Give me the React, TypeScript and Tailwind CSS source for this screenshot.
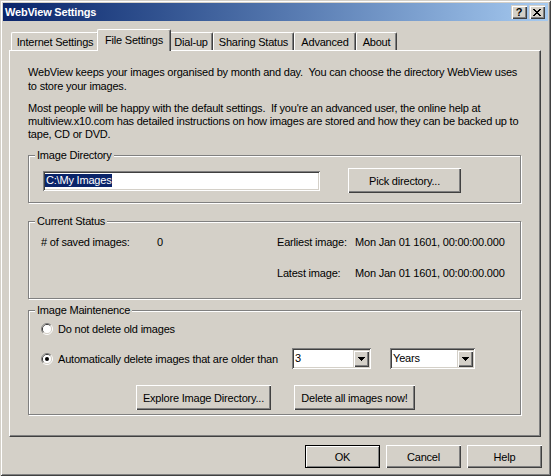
import React from 'react';

// classic 3D edges
const raised =
  'bg-[#d4d0c8] shadow-[inset_1px_1px_0_#ffffff,inset_-1px_-1px_0_#404040,inset_-2px_-2px_0_#808080]';
const raisedSmall =
  'bg-[#d4d0c8] shadow-[inset_1px_1px_0_#d4d0c8,inset_2px_2px_0_#ffffff,inset_-1px_-1px_0_#404040,inset_-2px_-2px_0_#808080]';
const sunken =
  'bg-white shadow-[inset_1px_1px_0_#808080,inset_-1px_-1px_0_#ffffff,inset_2px_2px_0_#404040,inset_-2px_-2px_0_#d4d0c8]';

const X_PIXELS = [
  'xx....xx',
  '.xx..xx.',
  '..xxxx..',
  '...xx...',
  '..xxxx..',
  '.xx..xx.',
  'xx....xx',
];

function CloseGlyph() {
  return (
    <svg width="8" height="7" shapeRendering="crispEdges">
      {X_PIXELS.map((row, y) =>
        row.split('').map((c, x) =>
          c === 'x' ? <rect key={`${x}-${y}`} x={x} y={y} width="1" height="1" fill="#000" /> : null
        )
      )}
    </svg>
  );
}

function DownArrow() {
  return (
    <svg width="7" height="4" shapeRendering="crispEdges">
      <rect x="0" y="0" width="7" height="1" fill="#000" />
      <rect x="1" y="1" width="5" height="1" fill="#000" />
      <rect x="2" y="2" width="3" height="1" fill="#000" />
      <rect x="3" y="3" width="1" height="1" fill="#000" />
    </svg>
  );
}

function Radio({ checked }: { checked?: boolean }) {
  return (
    <svg width="12" height="12" className="shrink-0">
      <path d="M9.89 2.11 A5.5 5.5 0 0 0 2.11 9.89" stroke="#808080" fill="none" />
      <path d="M2.11 9.89 A5.5 5.5 0 0 0 9.89 2.11" stroke="#ffffff" fill="none" />
      <path d="M9.18 2.82 A4.5 4.5 0 0 0 2.82 9.18" stroke="#404040" fill="none" />
      <path d="M2.82 9.18 A4.5 4.5 0 0 0 9.18 2.82" stroke="#d4d0c8" fill="none" />
      <circle cx="6" cy="6" r="4" fill="#ffffff" />
      {checked && <circle cx="6" cy="6" r="2" fill="#000000" />}
    </svg>
  );
}

function Button({
  children,
  className = '',
  isDefault,
}: {
  children: React.ReactNode;
  className?: string;
  isDefault?: boolean;
}) {
  if (isDefault) {
    return (
      <div
        className={`flex items-center justify-center border border-black bg-[#d4d0c8] shadow-[inset_1px_1px_0_#ffffff,inset_-1px_-1px_0_#808080] ${className}`}
      >
        {children}
      </div>
    );
  }
  return <div className={`flex items-center justify-center ${raised} ${className}`}>{children}</div>;
}

function Combo({ value, className }: { value: string; className: string }) {
  return (
    <div className={`h-[21px] flex items-center p-[2px] ${sunken} ${className}`}>
      <span className="flex-1 pl-[1px] leading-[13px]">{value}</span>
      <div className={`w-[16px] h-[17px] flex items-center justify-center ${raisedSmall}`}>
        <DownArrow />
      </div>
    </div>
  );
}

function Group({ title, children }: { title: string; children: React.ReactNode }) {
  return (
    <fieldset className="w-[493px] border border-[#808080] pl-[6px] shadow-[inset_1px_1px_0_#ffffff,1px_1px_0_#ffffff]">
      <legend className="px-[2px] leading-[13px] bg-[#d4d0c8]">{title}</legend>
      {children}
    </fieldset>
  );
}

const tabs = [
  { label: 'Internet Settings', width: 'w-[88px]' },
  { label: 'File Settings', width: 'w-[74px]', selected: true },
  { label: 'Dial-up', width: 'w-[44px]' },
  { label: 'Sharing Status', width: 'w-[81px]' },
  { label: 'Advanced', width: 'w-[62px]' },
  { label: 'About', width: 'w-[41px]' },
];

export default function App() {
  return (
    <div className="w-[551px] h-[476px] bg-[#d4d0c8] p-[3px] shadow-[inset_1px_1px_0_#d4d0c8,inset_-1px_-1px_0_#404040,inset_2px_2px_0_#ffffff,inset_-2px_-2px_0_#808080] font-['Liberation_Sans',Arial,sans-serif] text-[11px] leading-[14px] tracking-[-0.2px] text-black">
      {/* title bar */}
      <div className="h-[18px] flex items-center pl-[2px] pr-[3px] bg-linear-to-r from-[#0a246a] to-[#a6caf0]">
        <span className="flex-1 text-white font-bold">WebView Settings</span>
        <div className={`w-[16px] h-[14px] flex items-center justify-center ${raisedSmall}`}>
          <span className="font-bold text-[11px] leading-[11px] tracking-normal">?</span>
        </div>
        <div className={`ml-[2px] w-[16px] h-[14px] flex items-center justify-center ${raisedSmall}`}>
          <CloseGlyph />
        </div>
      </div>

      <div className="ml-[6px] w-[532px]">
        {/* tabs */}
        <div className="mt-[9px] h-[20px] flex items-end pl-[2px]">
          {tabs.map((tab) =>
            tab.selected ? (
              <div
                key={tab.label}
                className={`relative z-10 -mx-[2px] -mb-px h-[22px] ${tab.width} shrink-0 bg-[#d4d0c8] border-l border-t border-l-white border-t-white border-r border-r-[#404040] rounded-t-[2px] shadow-[inset_-1px_0_0_#808080] flex justify-center pt-[3px] whitespace-nowrap`}
              >
                {tab.label}
              </div>
            ) : (
              <div
                key={tab.label}
                className={`h-[18px] ${tab.width} shrink-0 border-l border-t border-l-white border-t-white border-r border-r-[#404040] rounded-t-[2px] shadow-[inset_-1px_0_0_#808080] flex justify-center pt-[2px] whitespace-nowrap`}
              >
                {tab.label}
              </div>
            )
          )}
        </div>

        {/* panel */}
        <div className="h-[387px] border border-l-white border-t-white border-r-[#404040] border-b-[#404040] shadow-[inset_-1px_-1px_0_#808080] pt-[14px] pl-[18px]">
          <p className="whitespace-nowrap">
            WebView keeps your images organised by month and day.{'\u00a0'} You can choose the directory WebView uses
            <br />
            to store your images.
          </p>
          <p className="mt-[9px] leading-[13px] whitespace-nowrap">
            Most people will be happy with the default settings.{'\u00a0'} If you're an advanced user, the online help at
            <br />
            multiview.x10.com has detailed instructions on how images are stored and how they can be backed up to
            <br />
            tape, CD or DVD.
          </p>

          <div className="mt-[8px]">
            <Group title="Image Directory">
              <div className="pl-[8px] pt-[6px] pb-[9px]">
                <div className="h-[25px] flex items-center">
                  <div className={`w-[277px] h-[20px] flex items-center pl-[2px] ${sunken}`}>
                    <span className="bg-[#0a246a] text-white leading-[13px] px-[1px]">C:\My Images</span>
                  </div>
                  <Button className="ml-[28px] w-[113px] h-[25px]">Pick directory...</Button>
                </div>
              </div>
            </Group>
          </div>

          <div className="mt-[12px]">
            <Group title="Current Status">
              <div className="pl-[6px] pt-[7px] pb-[18px]">
                <div className="flex whitespace-nowrap">
                  <span className="w-[116px]"># of saved images:</span>
                  <span className="w-[120px]">0</span>
                  <span className="w-[78px]">Earliest image:</span>
                  <span>Mon Jan 01 1601, 00:00:00.000</span>
                </div>
                <div className="mt-[17px] flex whitespace-nowrap pl-[236px]">
                  <span className="w-[78px]">Latest image:</span>
                  <span>Mon Jan 01 1601, 00:00:00.000</span>
                </div>
              </div>
            </Group>
          </div>

          <div className="mt-[5px]">
            <Group title="Image Maintenence">
              <div className="pl-[6px] pt-[5px] pb-[4px]">
                <div className="h-[13px] flex items-center gap-[5px]">
                  <Radio />
                  <span>Do not delete old images</span>
                </div>
                <div className="mt-[13px] h-[21px] flex items-center">
                  <div className="w-[251px] flex items-center gap-[5px] whitespace-nowrap">
                    <Radio checked />
                    <span>Automatically delete images that are older than</span>
                  </div>
                  <Combo value="3" className="w-[79px]" />
                  <Combo value="Years" className="ml-[19px] w-[85px]" />
                </div>
                <div className="mt-[16px] flex">
                  <Button className="ml-[95px] w-[135px] h-[25px]">Explore Image Directory...</Button>
                  <Button className="ml-[23px] w-[121px] h-[25px]">Delete all images now!</Button>
                </div>
              </div>
            </Group>
          </div>
        </div>

        {/* dialog buttons */}
        <div className="mt-[8px] flex justify-end gap-[6px] -mr-px">
          <Button isDefault className="w-[75px] h-[23px]">OK</Button>
          <Button className="w-[75px] h-[23px]">Cancel</Button>
          <Button className="w-[75px] h-[23px]">Help</Button>
        </div>
      </div>
    </div>
  );
}
